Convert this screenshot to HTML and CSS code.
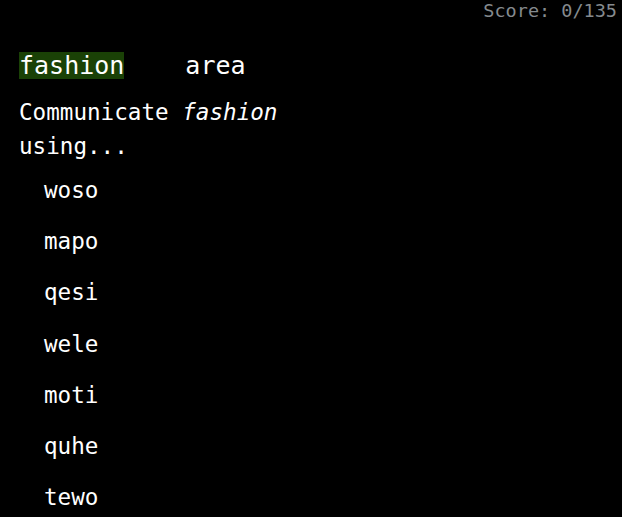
FILE: index.html
```html
<!DOCTYPE html>
<html>
<head>
<meta charset="utf-8">
<link rel="stylesheet" href="styles.css">
</head>
<body>
<div class="score">Score: 0/135</div>
<main class="quiz">
  <div class="prompt-row">
    <span class="term">fashion</span>
    <span class="category">area</span>
  </div>
  <p class="question">Communicate <em>fashion</em> using...</p>
  <ul class="options">
    <li>woso</li>
    <li>mapo</li>
    <li>qesi</li>
    <li>wele</li>
    <li>moti</li>
    <li>quhe</li>
    <li>tewo</li>
  </ul>
</main>
</body>
</html>
```
FILE: styles.css
```css
html, body {
  margin: 0;
  padding: 0;
  background: #000;
  color: #fff;
  font-family: "DejaVu Sans Mono", "Liberation Mono", monospace;
}
body {
  height: 517px;
  overflow: hidden;
}
.score {
  font-size: 18.5px;
  line-height: 22px;
  color: #858a8e;
  text-align: right;
  padding-right: 5px;
}
.quiz {
  padding-left: 19px;
}
.prompt-row {
  display: flex;
  gap: 61px;
  margin-top: 30px;
  font-size: 25px;
  line-height: 27px;
  height: 27px;
  align-items: center;
}
.term {
  display: inline-block;
  background: #1a4106;
  line-height: 27px;
}
.question {
  margin: 16px 0 0;
  font-size: 22.6px;
  line-height: 34px;
  width: 320px;
}
.question em {
  font-style: italic;
}
.options {
  list-style: none;
  margin: 2px 0 0;
  padding: 0 0 0 25px;
  font-size: 22.6px;
  line-height: 51.2px;
}
```
